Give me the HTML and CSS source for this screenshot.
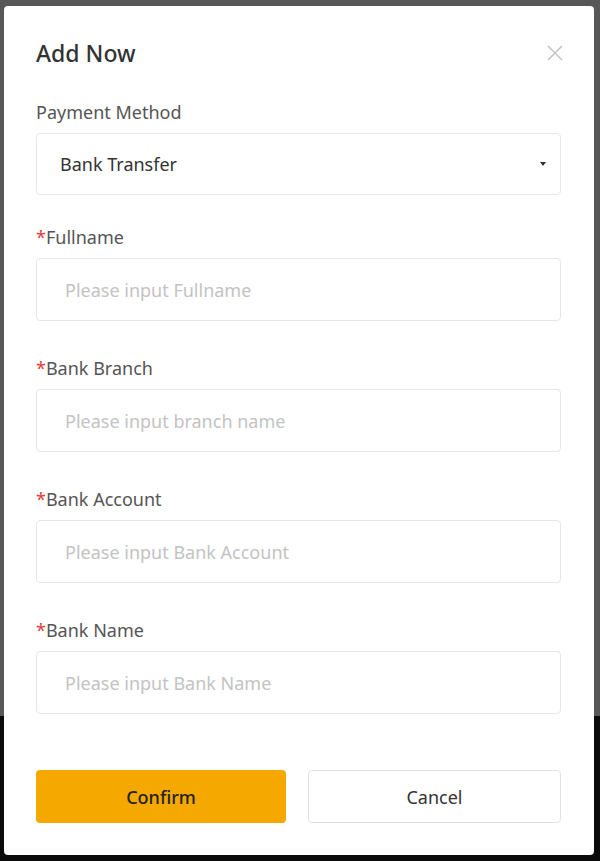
FILE: index.html
```html
<!DOCTYPE html>
<html lang="en">
<head>
    <meta charset="UTF-8">
    <meta name="viewport" content="width=device-width, initial-scale=1.0">
    <title>Add Now</title>
    <link rel="stylesheet" href="styles.css">
</head>
<body>

    <!-- Page behind the overlay -->
    <div class="page">
        <div class="page-top"></div>
        <div class="page-footer"></div>
    </div>

    <!-- Modal -->
    <div class="modal">
        <div class="modal-header">
            <h2 class="modal-title">Add Now</h2>
            <button class="modal-close" aria-label="Close">
                <svg width="16" height="16" viewBox="0 0 16 16">
                    <path d="M1 1 L15 15 M15 1 L1 15" stroke="#c4c4c4" stroke-width="1.6" fill="none"/>
                </svg>
            </button>
        </div>

        <div class="field field-first">
            <label class="field-label">Payment Method</label>
            <div class="select">
                <span>Bank Transfer</span>
                <span class="select-arrow"></span>
            </div>
        </div>

        <div class="field">
            <label class="field-label"><span class="req">*</span>Fullname</label>
            <input class="input" type="text" placeholder="Please input Fullname">
        </div>

        <div class="field">
            <label class="field-label"><span class="req">*</span>Bank Branch</label>
            <input class="input" type="text" placeholder="Please input branch name">
        </div>

        <div class="field">
            <label class="field-label"><span class="req">*</span>Bank Account</label>
            <input class="input" type="text" placeholder="Please input Bank Account">
        </div>

        <div class="field">
            <label class="field-label"><span class="req">*</span>Bank Name</label>
            <input class="input" type="text" placeholder="Please input Bank Name">
        </div>

        <div class="actions">
            <button class="btn btn-confirm">Confirm</button>
            <button class="btn btn-cancel">Cancel</button>
        </div>
    </div>

</body>
</html>
```

FILE: styles.css
```css
* {
    box-sizing: border-box;
}

body {
    margin: 0;
    width: 600px;
    height: 861px;
    overflow: hidden;
    font-family: "Noto Sans", "Open Sans", sans-serif;
    position: relative;
}

.page {
    display: flex;
    flex-direction: column;
    height: 100%;
}

.page-top {
    height: 716px;
    background-color: #575757;
}

.page-footer {
    flex: 1;
    background-color: #0b0b0b;
}

/* Modal sits over the page */
.modal {
    position: absolute;
    top: 6px;
    left: 4px;
    width: 590px;
    height: 849px;
    background: #fff;
    border-radius: 4px;
    padding: 32px 33px 32px 32px;
}

.modal-header {
    display: flex;
    justify-content: space-between;
    align-items: center;
    height: 30px;
}

.modal-title {
    margin: 0;
    font-size: 23px;
    font-weight: 500;
    color: #333;
}

.modal-close {
    border: none;
    background: none;
    padding: 0;
    margin-right: -2px;
    width: 16px;
    height: 16px;
    cursor: pointer;
}

.field {
    margin-top: 36px;
}

.field-first {
    margin-top: 33px;
}

.field-label {
    display: block;
    font-size: 18px;
    line-height: 22px;
    color: #555;
    margin-bottom: 10px;
}

.req {
    color: #e23b3b;
}

.select {
    display: flex;
    justify-content: space-between;
    align-items: center;
    height: 62px;
    border: 1px solid #e8e8e8;
    border-radius: 4px;
    padding: 0 14px 0 23px;
    font-size: 18px;
    color: #333;
    margin-bottom: -5px;
}

.select-arrow {
    width: 0;
    height: 0;
    border-left: 3px solid transparent;
    border-right: 3px solid transparent;
    border-top: 4px solid #333;
}

.input {
    display: block;
    width: 100%;
    height: 63px;
    border: 1px solid #e6e6e6;
    border-radius: 4px;
    padding: 0 28px;
    font-family: inherit;
    font-size: 18px;
    color: #333;
    outline: none;
}

.input::placeholder {
    color: #c3c3c3;
}

.actions {
    display: flex;
    gap: 22px;
    margin-top: 56px;
}

.btn {
    height: 53px;
    border-radius: 4px;
    font-family: inherit;
    font-size: 18px;
    cursor: pointer;
}

.btn-confirm {
    width: 250px;
    background: #f5a800;
    border: none;
    color: #222;
    font-weight: 500;
}

.btn-cancel {
    flex: 1;
    background: #fff;
    border: 1px solid #e2e2e2;
    color: #333;
}
```
